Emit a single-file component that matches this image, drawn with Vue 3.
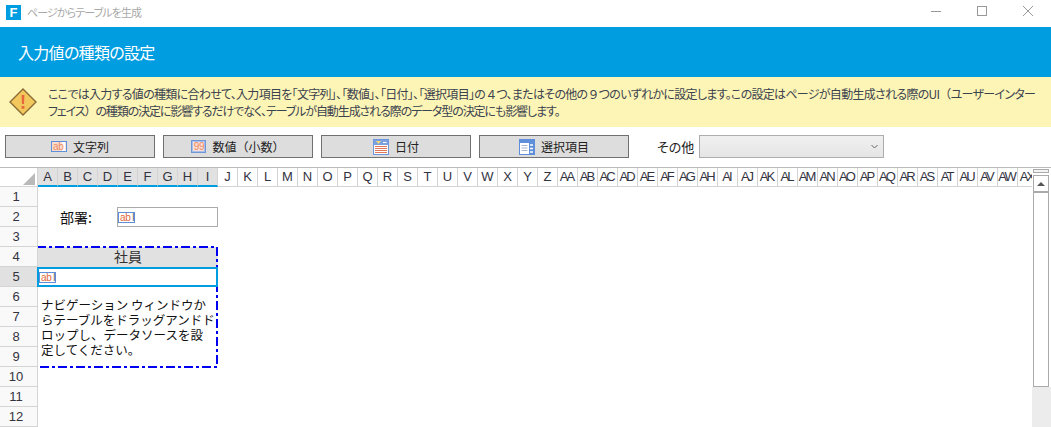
<script setup>
const letters = 'ABCDEFGHIJKLMNOPQRSTUVWXYZ'.split('')
const cols = [...letters, ...'ABCDEFGHIJKLMNOPQRSTUVWX'.split('').map(l => 'A' + l)]
const rows = Array.from({ length: 12 }, (_, i) => i + 1)
const buttons = [
  { label: '文字列', icon: 'abl' },
  { label: '数値（小数）', icon: 'num' },
  { label: '日付', icon: 'date' },
  { label: '選択項目', icon: 'list' }
]
</script>

<template>
  <div class="window">
    <div class="titlebar">
      <div class="logo">F</div>
      <div class="title">ページからテーブルを生成</div>
      <div class="winctl">
        <svg width="12" height="12" viewBox="0 0 12 12"><path d="M1 6.5h10" stroke="#999" fill="none" /></svg>
        <svg width="12" height="12" viewBox="0 0 12 12"><rect x="1.5" y="1.5" width="9" height="9" stroke="#999" fill="none" /></svg>
        <svg width="12" height="12" viewBox="0 0 12 12"><path d="M1 1l10 10M11 1L1 11" stroke="#999" fill="none" /></svg>
      </div>
    </div>
    <div class="banner">入力値の種類の設定</div>
    <div class="notice">
      <svg class="warn" width="28" height="28" viewBox="0 0 28 28">
        <path d="M14 1 L27 14 L14 27 L1 14 Z" fill="#f2c75c" stroke="#8a6a35" stroke-width="1.4" />
        <path d="M12.6 7h2.8l-.4 9h-2z" fill="#e8663c" />
        <rect x="12.6" y="18" width="2.8" height="2.8" fill="#e8663c" />
      </svg>
      <p>ここでは入力する値の種類に合わせて、入力項目を「文字列」、「数値」、「日付」、「選択項目」の<span class="wide">４</span>つ、またはその他の<span class="wide">９</span>つのいずれかに設定します。この設定はページが自動生成される際のUI<span class="wide">（</span>ユーザーインター<br /><span class="second">フェイス<span class="wide">）</span>の種類の決定に影響するだけでなく、テーブルが自動生成される際のデータ型の決定にも影響します。</span></p>
    </div>
    <div class="toolbar">
      <button v-for="b in buttons" :key="b.label" class="tbtn">
        <span v-if="b.icon === 'abl'" class="abl big"><i>ab</i><b>l</b></span>
        <span v-else-if="b.icon === 'num'" class="abl big numb"><i>99</i></span>
        <svg v-else-if="b.icon === 'date'" width="16" height="16" viewBox="0 0 16 16">
          <rect x="0.5" y="0.5" width="15" height="15" fill="#fff" stroke="#6f96d8" />
          <rect x="1" y="1" width="14" height="5" fill="#7aa0e0" />
          <path d="M3 2h5l-2.5 3z" fill="#f5d76e" />
          <path d="M10 3.5h3.5" stroke="#fff" />
          <path d="M2 7.5h12M2 9.5h12M2 11.5h12M2 13.5h12" stroke="#e0785a" />
        </svg>
        <svg v-else width="16" height="16" viewBox="0 0 16 16">
          <rect x="0.5" y="0.5" width="15" height="15" fill="#fff" stroke="#5f8edb" />
          <rect x="1" y="1" width="14" height="3" fill="#5f8edb" />
          <rect x="10" y="1" width="5" height="14" fill="#5f8edb" />
          <path d="M2.5 6.5h6M2.5 9h6M2.5 11.5h6" stroke="#a9b8d0" />
          <path d="M11 6h3M11 9.5h3M11 13h3" stroke="#fff" stroke-width="1.4" />
        </svg>
        <span>{{ b.label }}</span>
      </button>
      <span class="other">その他</span>
      <div class="select">
        <svg width="7" height="5" viewBox="0 0 7 5"><path d="M.5 1L3.5 4L6.5 1" stroke="#666" fill="none" /></svg>
      </div>
    </div>
    <div class="sheet">
      <div class="main">
        <div class="colhead">
          <div class="corner"><span class="tri"></span></div>
          <div v-for="(c, i) in cols" :key="c" class="col" :class="{ on: i < 9, dbl: c.length > 1 }"><span>{{ c }}</span></div>
        </div>
        <div class="body">
          <div class="rowhead">
            <div v-for="r in rows" :key="r" class="row" :class="{ on: r === 5 }">{{ r }}</div>
          </div>
          <div class="canvas">
            <div class="field">
              <span class="flabel">部署:</span>
              <div class="finput"><span class="abl"><i>ab</i><b>l</b></span></div>
            </div>
            <div class="table">
              <div class="thead">社員</div>
              <div class="tcell"><span class="abl"><i>ab</i><b>l</b></span></div>
              <div class="tmsg">ナビゲーション ウィンドウか<br />らテーブルをドラッグアンドド<br />ロップし、データソースを設<br />定してください。</div>
              <svg class="dash" width="183" height="122" viewBox="0 0 183 122">
                <rect x="1" y="1" width="180" height="120" fill="none" stroke="#0000f0" stroke-width="2" stroke-dasharray="9 3 3 3" />
              </svg>
            </div>
          </div>
        </div>
      </div>
      <div class="scroll">
        <div class="split"></div>
        <div class="sbtn"><span class="up"></span></div>
        <div class="thumb"></div>
        <div class="track"></div>
      </div>
    </div>
  </div>
</template>

<style scoped>
.window {
  width: 1051px;
  height: 427px;
  overflow: hidden;
  background: #fff;
  display: flex;
  flex-direction: column;
  font-family: "Noto Sans CJK JP", "Noto Sans", sans-serif;
  color: #222;
}
.titlebar {
  height: 27px;
  display: flex;
  align-items: center;
  padding-left: 6px;
  flex: none;
}
.logo {
  width: 15px;
  height: 15px;
  margin-top: -3px;
  background: #009de0;
  color: #fff;
  font: bold 13px/15px "Liberation Sans", sans-serif;
  text-align: center;
}
.title {
  margin-left: 6px;
  margin-top: -3px;
  font-size: 11px;
  letter-spacing: -0.9px;
  font-feature-settings: "palt";
  color: #a8a8a8;
}
.winctl {
  margin-left: auto;
  margin-top: -5px;
  display: flex;
  gap: 34px;
  padding-right: 17px;
}
.winctl svg { display: block; }
.banner {
  height: 50px;
  flex: none;
  background: #009de0;
  color: #fff;
  font-size: 16px;
  font-feature-settings: "palt";
  letter-spacing: -0.7px;
  line-height: 50px;
  padding-left: 18px;
}
.notice {
  height: 50px;
  flex: none;
  background: #fdf5b5;
  display: flex;
  align-items: center;
  padding-left: 9px;
}
.warn { flex: none; }
.notice p {
  margin: 0 0 0 11px;
  font-size: 12px;
  font-feature-settings: "palt";
  letter-spacing: -0.7px;
  line-height: 17px;
  color: #3b4250;
  white-space: nowrap;
}
.notice .second { letter-spacing: -1.1px; }
.wide { font-feature-settings: normal; }
.toolbar {
  height: 23px;
  flex: none;
  margin-top: 8px;
  padding-left: 5px;
  display: flex;
  align-items: center;
  gap: 8px;
}
.tbtn {
  width: 150px;
  height: 23px;
  box-sizing: border-box;
  border: 1px solid #707070;
  background: #dddddd;
  display: flex;
  align-items: center;
  justify-content: center;
  gap: 6px;
  padding: 0;
  font-family: inherit;
  font-size: 12px;
  color: #222;
}
.other {
  margin-left: 20px;
  font-size: 13px;
  font-feature-settings: "palt";
  color: #222;
  width: 34px;
  white-space: nowrap;
}
.select {
  width: 185px;
  height: 23px;
  box-sizing: border-box;
  border: 1px solid #adadad;
  background: linear-gradient(#f0f0f0, #e5e5e5);
  display: flex;
  align-items: center;
  justify-content: flex-end;
  padding-right: 5px;
}
.abl {
  display: inline-flex;
  align-items: center;
  width: 17px;
  height: 11px;
  box-sizing: border-box;
  border: 1px solid #5f8edb;
  background: #fff;
  font: 10px/9px "Liberation Sans", sans-serif;
  overflow: hidden;
  padding-left: 1px;
  flex: none;
}
.abl i { font-style: normal; color: #e2683c; letter-spacing: -0.4px; }
.abl b { font-weight: normal; color: #555; margin-left: 2px; }
.abl.big {
  width: 16px;
  height: 11px;
  background: linear-gradient(90deg, #f8dccd 68%, #fff 68%);
}
.abl.big i { color: #ee8a64; }
.abl.big b { color: #7c8fb0; }
.abl.numb {
  height: 13px;
  width: 15px;
  background: #f8ded6;
  border: 1px solid #6f96d8;
  outline: 1px solid #a8c0ea;
  outline-offset: -2px;
  padding-left: 0;
  justify-content: center;
}
.sheet {
  flex: 1;
  margin-top: 9px;
  display: flex;
  min-height: 0;
  border-top: 1px solid #bbb;
}
.main {
  flex: 1;
  min-width: 0;
  overflow: hidden;
}
.colhead {
  display: flex;
  height: 19px;
}
.corner {
  width: 38px;
  flex: none;
  box-sizing: border-box;
  border-bottom: 1px solid #d4d4d4;
  border-right: 1px solid #d4d4d4;
  display: flex;
  align-items: flex-end;
  justify-content: flex-end;
  padding: 0 2px 1px 0;
}
.tri {
  width: 0;
  height: 0;
  border-left: 12px solid transparent;
  border-bottom: 12px solid #b9b9b9;
}
.col {
  width: 20px;
  flex: none;
  box-sizing: border-box;
  border-right: 1px solid #d4d4d4;
  border-bottom: 1px solid #d4d4d4;
  font: 13px/18px "Liberation Sans", sans-serif;
  color: #33333f;
  text-align: center;
  overflow: hidden;
  display: flex;
  justify-content: center;
}
.col span { flex: none; }
.col.dbl span { letter-spacing: -2px; margin-left: -2px; }
.col.on {
  background: #e1e1e1;
  border-bottom: 2px solid #009de0;
}
.body { display: flex; }
.rowhead {
  width: 38px;
  flex: none;
  position: relative;
  z-index: 2;
}
.row {
  height: 20px;
  box-sizing: border-box;
  background: #f9f9f9;
  border-right: 1px solid #d4d4d4;
  border-bottom: 1px solid #d4d4d4;
  font: 13px/19px "Liberation Sans", sans-serif;
  color: #33333f;
  text-align: center;
  padding-right: 5px;
}
.row.on { background: #e1e1e1; }
.canvas {
  flex: 1;
  padding-top: 20px;
}
.field {
  width: 180px;
  height: 20px;
  display: flex;
  align-items: center;
  margin-bottom: 20px;
}
.flabel {
  margin-left: 22px;
  width: 57px;
  font-size: 14px;
  color: #111;
}
.finput {
  width: 101px;
  height: 20px;
  box-sizing: border-box;
  border: 1px solid #aaa;
  display: flex;
  align-items: center;
  flex: none;
}
.table {
  width: 180px;
  height: 120px;
  position: relative;
}
.dash {
  position: absolute;
  left: -2px;
  top: -1px;
  z-index: 1;
  pointer-events: none;
}
.thead {
  height: 20px;
  background: #e1e1e1;
  text-align: center;
  font-size: 14px;
  line-height: 18px;
  color: #333;
}
.tcell {
  height: 20px;
  box-sizing: border-box;
  margin-left: -1px;
  border: 2px solid #009de0;
  display: flex;
  align-items: center;
  position: relative;
  z-index: 2;
}
.tmsg {
  padding: 10px 1px 0 3px;
  font-size: 12.5px;
  line-height: 15px;
  color: #111;
  white-space: nowrap;
}
.scroll {
  width: 19px;
  flex: none;
  background: #fff;
  display: flex;
  flex-direction: column;
  align-items: flex-start;
  padding-left: 1px;
  box-sizing: border-box;
}
.split {
  width: 16px;
  height: 4px;
  margin-top: 1px;
  box-sizing: border-box;
  border: 1px solid #aaa;
  background: #f4f4f4;
  flex: none;
}
.sbtn {
  width: 16px;
  height: 17px;
  margin-top: 2px;
  box-sizing: border-box;
  border: 1px solid #aaa;
  background: #fff;
  display: flex;
  align-items: center;
  justify-content: center;
  flex: none;
}
.up {
  width: 0;
  height: 0;
  border-left: 4px solid transparent;
  border-right: 4px solid transparent;
  border-bottom: 4px solid #555;
}
.thumb {
  width: 16px;
  height: 195px;
  box-sizing: border-box;
  border: 1px solid #aaa;
  background: #fff;
  flex: none;
}
.track {
  flex: 1;
  margin-left: -1px;
  width: 19px;
  background: #ececec;
}
</style>
